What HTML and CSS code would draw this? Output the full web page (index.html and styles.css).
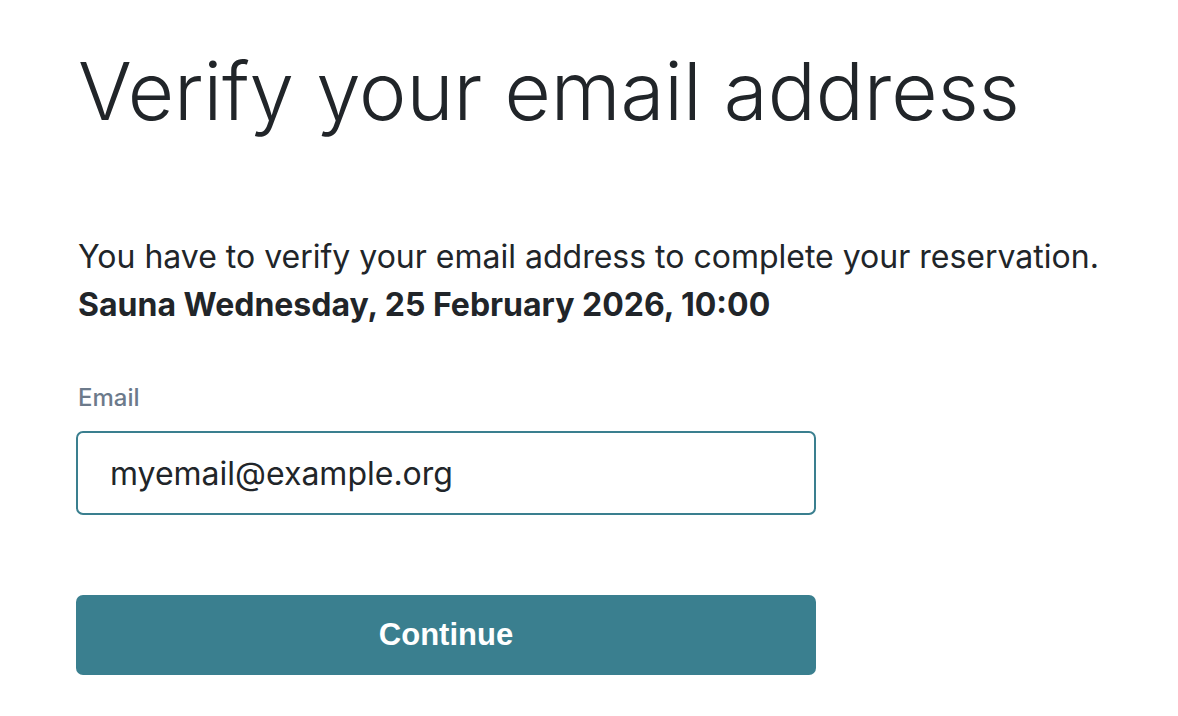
FILE: index.html
```html
<!DOCTYPE html>
<html lang="en">
<head>
<meta charset="utf-8">
<title>Verify your email address</title>
<link rel="stylesheet" href="styles.css">
</head>
<body>
<main class="page">
  <h1 class="title">Verify your email address</h1>
  <p class="intro">You have to verify your email address to complete your reservation.<br><strong>Sauna Wednesday, 25 February 2026, 10:00</strong></p>
  <form class="form">
    <label class="label" for="email">Email</label>
    <input class="input" id="email" type="email" value="myemail@example.org">
    <button class="button" type="button">Continue</button>
  </form>
</main>
</body>
</html>
```
FILE: styles.css
```css
html, body {
  margin: 0;
  padding: 0;
  background: #ffffff;
}
body {
  font-family: Inter, "Noto Sans", sans-serif;
  color: #212529;
}
.page {
  padding: 43px 78px;
}
.title {
  margin: 0;
  font-size: 80px;
  font-weight: 300;
  line-height: 96px;
  letter-spacing: -0.1px;
}
.intro {
  margin: 94px 0 0;
  font-size: 32px;
  line-height: 48px;
}
.intro strong {
  font-weight: 700;
}
.form {
  display: flex;
  flex-direction: column;
  width: 740px;
  margin-left: -2px;
  margin-top: 54px;
}
.label {
  font-size: 24px;
  line-height: 29px;
  font-weight: 500;
  color: #6c7a8b;
  margin-left: 2px;
  margin-bottom: 19px;
}
.input {
  box-sizing: border-box;
  height: 84px;
  border: 2px solid #3a7f8f;
  border-radius: 7px;
  padding: 0 32px;
  font-family: Inter, sans-serif;
  font-size: 32px;
  color: #212529;
  outline: none;
}
.button {
  box-sizing: border-box;
  margin-top: 80px;
  height: 80px;
  border: none;
  border-radius: 7px;
  background: #3a7f8f;
  color: #ffffff;
  font-family: "Liberation Sans", Arial, sans-serif;
  font-size: 31px;
  font-weight: 700;
}
```
